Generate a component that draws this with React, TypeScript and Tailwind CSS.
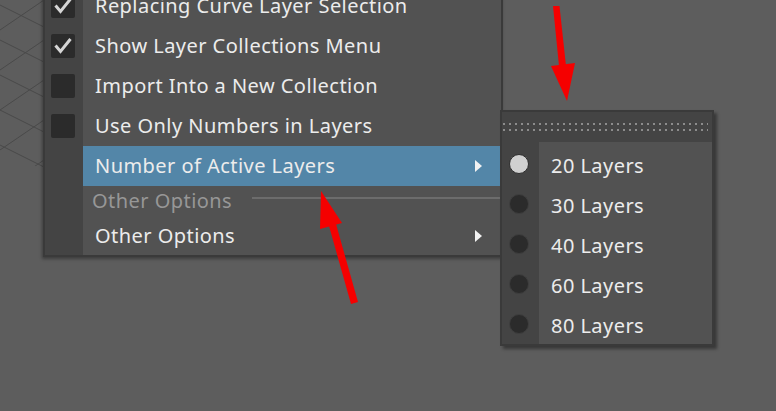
import React from 'react';

type Item = {
    label: string;
    check?: 'on' | 'off';
    sub?: boolean;
    active?: boolean;
};

const items: Item[] = [
    { label: 'Replacing Curve Layer Selection', check: 'on' },
    { label: 'Show Layer Collections Menu', check: 'on' },
    { label: 'Import Into a New Collection', check: 'off' },
    { label: 'Use Only Numbers in Layers', check: 'off' },
    { label: 'Number of Active Layers', sub: true, active: true },
];

const layers = ['20 Layers', '30 Layers', '40 Layers', '60 Layers', '80 Layers'];

function CheckBox({ on }: { on: boolean }) {
    return (
        <div className="ml-[6px] w-[24px] h-[24px] rounded-[2px] bg-[#2b2b2b] flex items-center justify-center">
            {on && (
                <svg width="24" height="24" viewBox="0 0 24 24">
                    <path d="M4.5 11.5 L9.5 17.5 L19.5 5" fill="none" stroke="#d6d6d6" strokeWidth="3" />
                </svg>
            )}
        </div>
    );
}

function SubArrow() {
    return (
        <svg width="7" height="12" viewBox="0 0 7 12" className="mr-[19px]">
            <path d="M0 0 L7 6 L0 12 Z" fill="#f2f2f2" />
        </svg>
    );
}

function Row({ item }: { item: Item }) {
    return (
        <div className="flex h-[40px]">
            <div className="w-[38px] bg-[#444444] flex items-center">
                {item.check && <CheckBox on={item.check === 'on'} />}
            </div>
            <div className={`flex-1 flex items-center justify-between pl-[12px] ${item.active ? 'bg-[#5386a8]' : ''}`}>
                <span>{item.label}</span>
                {item.sub && <SubArrow />}
            </div>
        </div>
    );
}

function GridLines() {
    const down = [-30, 5, 40, 75, 110, 145];
    const up = [30, 70, 110, 150, 190, 230];
    return (
        <svg width="44" height="180" viewBox="0 0 44 180" className="absolute left-0 top-0">
            <defs>
                <clipPath id="g">
                    <polygon points="0,0 44,0 44,170 0,150" />
                </clipPath>
            </defs>
            <g clipPath="url(#g)" stroke="#4a4a4a" strokeWidth="1">
                {down.map((y) => (
                    <line key={'d' + y} x1="0" y1={y} x2="44" y2={y + 22} />
                ))}
                {up.map((y) => (
                    <line key={'u' + y} x1="0" y1={y} x2="44" y2={y - 30} />
                ))}
            </g>
        </svg>
    );
}

export default function App() {
    return (
        <div className="relative w-[776px] h-[411px] overflow-hidden bg-[#5d5d5d] font-['Noto_Sans',sans-serif] text-[20px] leading-none tracking-[0.45px] text-[#ececec]">
            <GridLines />

            {/* main menu */}
            <div className="absolute left-[43px] top-[-16px] w-[460px] border-2 border-[#3a3a3a] bg-[#525252] shadow-[-1px_2px_3px_rgba(0,0,0,0.35)]">
                {items.map((item) => (
                    <Row key={item.label} item={item} />
                ))}
                <div className="flex h-[31px]">
                    <div className="w-[38px] bg-[#444444]" />
                    <div className="flex-1 flex items-center pl-[9px] pb-[1px] text-[#979797]">
                        <span>Other Options</span>
                        <div className="ml-[20px] mb-[6px] flex-1 h-[2px] bg-[#6c6c6c]" />
                    </div>
                </div>
                <div className="flex h-[38px]">
                    <div className="w-[38px] bg-[#444444]" />
                    <div className="flex-1 flex items-center justify-between pl-[12px] pb-[1px]">
                        <span>Other Options</span>
                        <SubArrow />
                    </div>
                </div>
            </div>

            {/* sub menu */}
            <div className="absolute left-[500px] top-[110px] w-[214px] border-2 border-[#3a3a3a] bg-[#525252] shadow-[3px_3px_3px_rgba(0,0,0,0.4)]">
                <div className="h-[30px] bg-[#444444] flex flex-col justify-center gap-[4px] pl-[1px] pr-[4px]">
                    <div className="h-[2px] bg-[repeating-linear-gradient(90deg,#8c8c8c_0_2px,transparent_2px_6px)]" />
                    <div className="h-[2px] bg-[repeating-linear-gradient(90deg,#8c8c8c_0_2px,transparent_2px_6px)]" />
                </div>
                <div className="flex">
                    <div className="w-[37px] bg-[#444444] pt-[2px]">
                        {layers.map((l, i) => (
                            <div key={l} className="h-[40px] flex items-center pl-[7px]">
                                <div
                                    className={`w-[20px] h-[20px] rounded-full border ${
                                        i === 0 ? 'bg-[#d0d0d0] border-[#2e2e2e]' : 'bg-[#2b2b2b] border-[#3e3e3e]'
                                    }`}
                                />
                            </div>
                        ))}
                    </div>
                    <div className="flex-1 pt-[2px]">
                        {layers.map((l) => (
                            <div key={l} className="h-[40px] flex items-center pl-[12px] pt-[3px]">
                                {l}
                            </div>
                        ))}
                    </div>
                </div>
            </div>

            {/* annotation arrows */}
            <svg width="776" height="411" viewBox="0 0 776 411" className="absolute left-0 top-0 pointer-events-none">
                <polygon points="553,6 559.5,6 566,66 559,66" fill="#f50000" />
                <polygon points="551,66 575,63 567,101" fill="#f50000" />
                <polygon points="329,226 336,224 358,302 351,304" fill="#f50000" />
                <polygon points="321,191 342,223 320,229" fill="#f50000" />
            </svg>
        </div>
    );
}
